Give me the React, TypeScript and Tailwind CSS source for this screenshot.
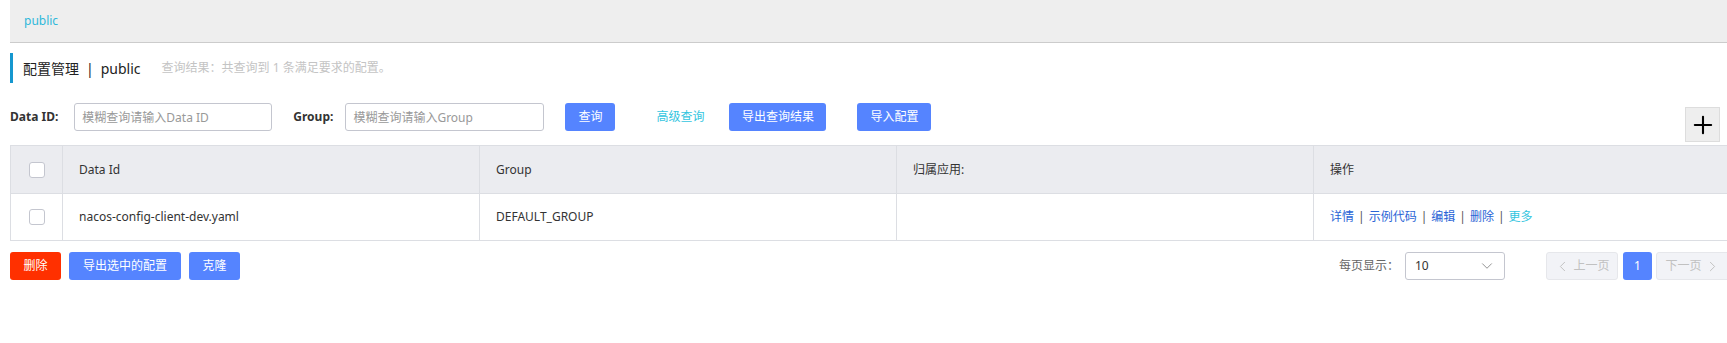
import { Plus, ChevronDown, ChevronLeft, ChevronRight } from "lucide-react";

const FONT = "font-['Noto_Sans','Noto_Sans_CJK_SC',sans-serif]";

function Checkbox() {
  return (
    <div className="h-[16px] w-[16px] rounded-[3px] border border-[#c4c6cf] bg-white" />
  );
}

function BlueButton({ w, children }: { w: string; children: React.ReactNode }) {
  return (
    <button
      className={`flex h-[28px] items-center justify-center rounded-[3px] bg-[#5584ff] text-[12px] text-white ${w}`}
    >
      {children}
    </button>
  );
}

const OPS = ["详情", "示例代码", "编辑", "删除"];

export default function App() {
  return (
    <div className={`h-[343px] w-[1727px] overflow-hidden bg-white ${FONT}`}>
      <div className="w-[1740px] pl-[10px]">
        {/* breadcrumb bar */}
        <div className="flex h-[43px] items-center border-b border-[#cccccc] bg-[#eeeeee] pl-[14px] text-[12px] text-[#2fb8da]">
          public
        </div>

        {/* title */}
        <div className="mt-[10px] flex h-[30px] items-center border-l-[3px] border-[#1597cf] pl-[10px]">
          <span className="text-[14px] text-[#222]">配置管理</span>
          <span className="mx-[7px] text-[14px] text-[#222]">|</span>
          <span className="text-[14px] text-[#222]">public</span>
          <span className="ml-[21px] text-[12px] text-[#c4c4c4]">
            查询结果：共查询到 1 条满足要求的配置。
          </span>
        </div>

        {/* filters */}
        <div className="mt-[20px] flex items-start">
          <div className="flex h-[28px] items-center">
            <span className="text-[12px] font-bold text-[#333]">Data ID:</span>
            <input
              className="ml-[16px] h-[28px] w-[198px] rounded-[3px] border border-[#c4c6cf] px-[7px] text-[12px] outline-none placeholder:text-[#999]"
              placeholder="模糊查询请输入Data ID"
            />
            <span className="ml-[21px] text-[12px] font-bold text-[#333]">Group:</span>
            <input
              className="ml-[12px] h-[28px] w-[199px] rounded-[3px] border border-[#c4c6cf] px-[7px] text-[12px] outline-none placeholder:text-[#999]"
              placeholder="模糊查询请输入Group"
            />
            <div className="ml-[21px]">
              <BlueButton w="w-[50px]">查询</BlueButton>
            </div>
            <span className="ml-[41px] text-[12px] text-[#33c5e0]">高级查询</span>
            <div className="ml-[25px]">
              <BlueButton w="w-[97px]">导出查询结果</BlueButton>
            </div>
            <div className="ml-[31px]">
              <BlueButton w="w-[74px]">导入配置</BlueButton>
            </div>
          </div>
          <div className="mr-[20px] ml-auto mt-[4px] flex h-[35px] w-[35px] items-center justify-center border border-[#dddddd] bg-[#eeeeee]">
            <Plus size={28} strokeWidth={1.8} className="text-black" />
          </div>
        </div>

        {/* table */}
        <div className="mt-[3px] border border-[#dcdee3] text-[12px] text-[#333]">
          <div className="grid h-[48px] grid-cols-[51px_417px_417px_417px_1fr] border-b border-[#dcdee3] bg-[#ebecf0]">
            <div className="flex items-center justify-center">
              <Checkbox />
            </div>
            <div className="flex items-center border-l border-[#dcdee3] pl-[16px]">Data Id</div>
            <div className="flex items-center border-l border-[#dcdee3] pl-[16px]">Group</div>
            <div className="flex items-center border-l border-[#dcdee3] pl-[16px]">归属应用:</div>
            <div className="flex items-center border-l border-[#dcdee3] pl-[16px]">操作</div>
          </div>
          <div className="grid h-[46px] grid-cols-[51px_417px_417px_417px_1fr]">
            <div className="flex items-center justify-center">
              <Checkbox />
            </div>
            <div className="flex items-center border-l border-[#dcdee3] pl-[16px]">
              nacos-config-client-dev.yaml
            </div>
            <div className="flex items-center border-l border-[#dcdee3] pl-[16px]">DEFAULT_GROUP</div>
            <div className="flex items-center border-l border-[#dcdee3] pl-[16px]" />
            <div className="flex items-center border-l border-[#dcdee3] pl-[16px]">
              {OPS.map((op) => (
                <span key={op} className="flex items-center">
                  <span className="text-[#2a64d6]">{op}</span>
                  <span className="mx-[4px] text-[#555]">|</span>
                </span>
              ))}
              <span className="text-[#33c5e0]">更多</span>
            </div>
          </div>
        </div>

        {/* footer */}
        <div className="mt-[11px] flex items-center">
          <button className="flex h-[28px] w-[51px] items-center justify-center rounded-[3px] bg-[#ff3000] text-[12px] text-white">
            删除
          </button>
          <div className="ml-[8px]">
            <BlueButton w="w-[112px]">导出选中的配置</BlueButton>
          </div>
          <div className="ml-[8px]">
            <BlueButton w="w-[51px]">克隆</BlueButton>
          </div>

          <div className="mr-[10px] ml-auto flex items-center">
            <span className="text-[12px] text-[#666]">每页显示：</span>
            <div className="ml-[6px] flex h-[28px] w-[100px] items-center justify-between rounded-[3px] border border-[#c4c6cf] pl-[9px] pr-[8px]">
              <span className="text-[12px] text-[#333]">10</span>
              <ChevronDown size={18} strokeWidth={1.2} className="text-[#888]" />
            </div>
            <div className="ml-[41px] flex h-[28px] w-[72px] items-center justify-center rounded-[3px] border border-[#e6e7eb] bg-[#f2f3f7] text-[12px] text-[#c1c1c1]">
              <ChevronLeft size={17} strokeWidth={1.4} className="mr-[2px]" />
              上一页
            </div>
            <div className="ml-[5px] flex h-[28px] w-[29px] items-center justify-center rounded-[3px] bg-[#5584ff] text-[12px] text-white">
              1
            </div>
            <div className="ml-[4px] flex h-[28px] w-[74px] items-center justify-center rounded-[3px] border border-[#e6e7eb] bg-[#f2f3f7] text-[12px] text-[#c1c1c1]">
              下一页
              <ChevronRight size={17} strokeWidth={1.4} className="ml-[2px]" />
            </div>
          </div>
        </div>
      </div>
    </div>
  );
}
